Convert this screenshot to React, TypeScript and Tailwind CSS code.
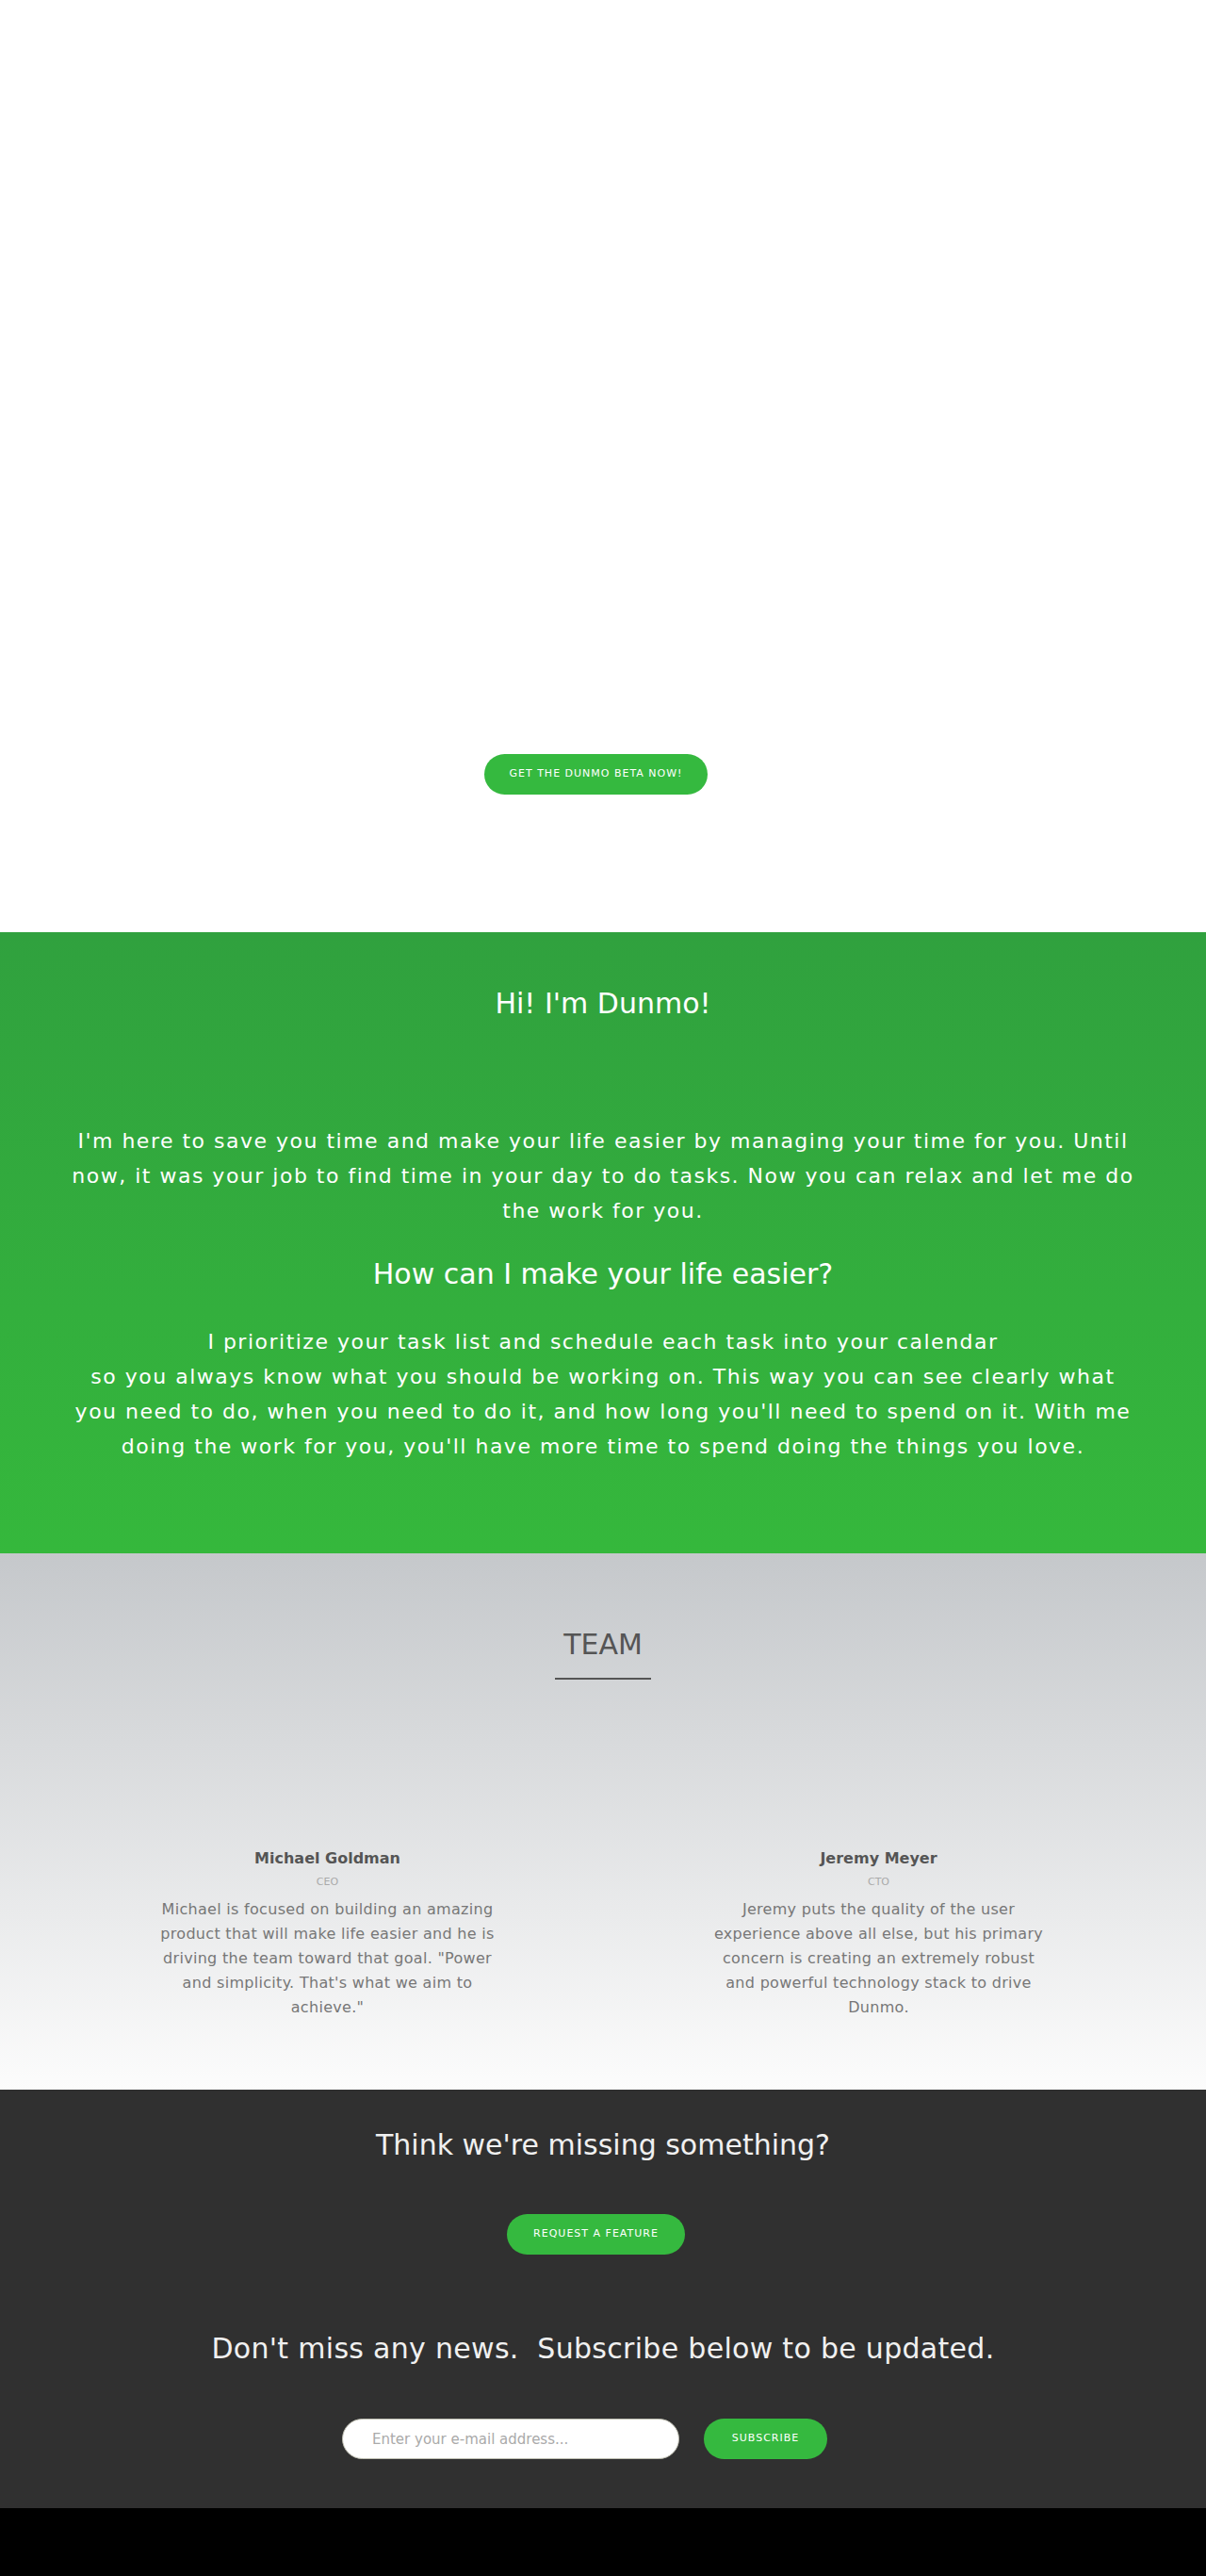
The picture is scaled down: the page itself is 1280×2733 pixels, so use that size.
const team = [
  {
    name: "Michael Goldman",
    role: "CEO",
    bio: "Michael is focused on building an amazing product that will make life easier and he is driving the team toward that goal. \"Power and simplicity. That's what we aim to achieve.\"",
  },
  {
    name: "Jeremy Meyer",
    role: "CTO",
    bio: "Jeremy puts the quality of the user experience above all else, but his primary concern is creating an extremely robust and powerful technology stack to drive Dunmo.",
  },
];

function PillButton({ label, width }: { label: string; width: string }) {
  return (
    <button
      className={`${width} h-[43px] rounded-full bg-[#35b93f] text-[11px] tracking-[1px] text-white uppercase`}
    >
      {label}
    </button>
  );
}

export default function App() {
  return (
    <div className="font-['DejaVu_Sans',sans-serif]">
      {/* Hero */}
      <section className="h-[989px] bg-white flex justify-center pt-[800px] pr-[15px]">
        <PillButton label="Get the Dunmo beta now!" width="w-[237px]" />
      </section>

      {/* About */}
      <section className="h-[659px] bg-linear-to-b from-[#30a13e] to-[#35b83c] text-white text-center pt-[59px]">
        <div className="mx-auto w-[1170px] px-[15px]">
          <h2 className="text-[30px] leading-[33px]">Hi! I'm Dunmo!</h2>
          <p className="mt-[111px] text-[22px] leading-[37px] tracking-[1.5px]">
            I'm here to save you time and make your life easier by managing your time for you. Until
            now, it was your job to find time in your day to do tasks. Now you can relax and let me do
            the work for you.
          </p>
          <h2 className="mt-[32px] text-[30px] leading-[33px]">How can I make your life easier?</h2>
          <p className="mt-[37px] text-[22px] leading-[37px] tracking-[1.5px]">
            I prioritize your task list and schedule each task into your calendar
            <br />
            so you always know what you should be working on. This way you can see clearly what
            <br />
            you need to do, when you need to do it, and how long you'll need to spend on it. With me
            doing the work for you, you'll have more time to spend doing the things you love.
          </p>
        </div>
      </section>

      {/* Team */}
      <section className="h-[569px] bg-linear-to-b from-[#c5c8cb] to-[#fcfcfc] pt-[80px] text-center">
        <h2 className="text-[30px] leading-[33px] text-[#555]">TEAM</h2>
        <div className="mx-auto mt-[19px] h-[2px] w-[102px] bg-[#555]" />
        <div className="mx-auto mt-[179px] grid w-[1170px] grid-cols-2">
          {team.map((m) => (
            <div key={m.name} className="flex flex-col items-center px-[15px]">
              <h3 className="text-[16px] leading-[22px] font-semibold text-[#555]">{m.name}</h3>
              <div className="mt-[6px] text-[11px] leading-[16px] text-[#aaa]">{m.role}</div>
              <p className="mt-[8px] w-[362px] text-[16px] leading-[26px] tracking-[0.3px] text-[#777]">
                {m.bio}
              </p>
            </div>
          ))}
        </div>
      </section>

      {/* Contact */}
      <section className="h-[444px] bg-[#303030] pt-[42px] text-center text-[#f0f0f0]">
        <h2 className="text-[30px] leading-[33px]">Think we're missing something?</h2>
        <div className="mt-[57px] flex justify-center pr-[15px]">
          <PillButton label="Request a feature" width="w-[189px]" />
        </div>
        <h2 className="mt-[83px] text-[30px] leading-[33px] tracking-[0.3px]">
          Don't miss any news.&nbsp; Subscribe below to be updated.
        </h2>
        <form className="mt-[58px] flex justify-center gap-[26px] pr-[39px]">
          <input
            type="email"
            placeholder="Enter your e-mail address..."
            className="h-[43px] w-[358px] rounded-full border border-[#bdbdb0] bg-white pl-[31px] text-[15px] text-[#333] placeholder:text-[#aaa] outline-none"
          />
          <PillButton label="Subscribe" width="w-[131px]" />
        </form>
      </section>

      <footer className="h-[72px] bg-black" />
    </div>
  );
}
